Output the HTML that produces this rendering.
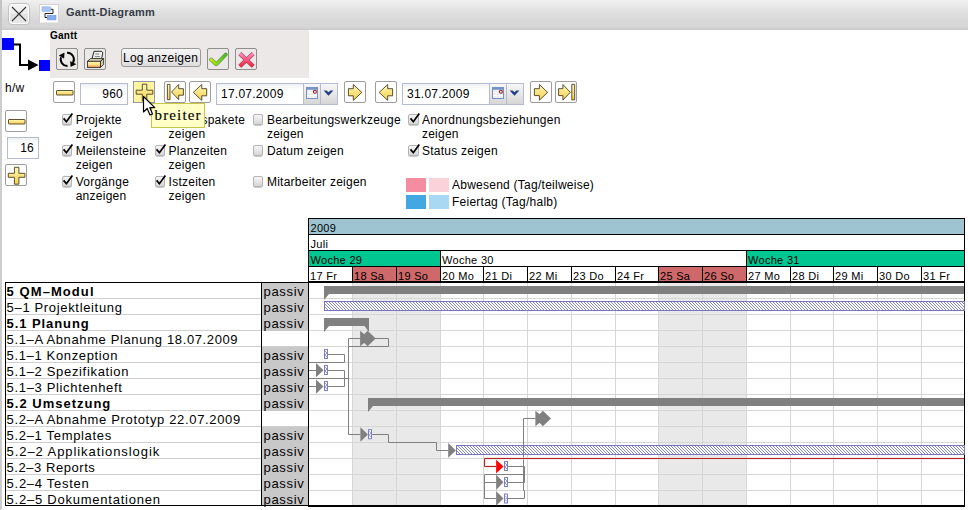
<!DOCTYPE html>
<html><head><meta charset="utf-8">
<style>
html,body{margin:0;padding:0;width:968px;height:510px;overflow:hidden;background:#fff;position:relative;font-family:"Liberation Sans",sans-serif;}
.a{position:absolute;}
.t{position:absolute;white-space:nowrap;font-size:12px;line-height:14px;color:#000;letter-spacing:0.25px;}
.btn{position:absolute;box-sizing:border-box;border:1px solid #9d9d9d;border-radius:2px;background:#fff;}
.pbtn{position:absolute;box-sizing:border-box;border:1px solid #8e8e8e;border-radius:2px;background:#ebe8e7;}
.inp{position:absolute;box-sizing:border-box;border:1px solid #b6bbd2;background:linear-gradient(#eef0f2,#fff 6px);}
.cb{position:absolute;box-sizing:border-box;width:10.5px;height:10.5px;border:1px solid #b4b4b4;border-radius:2px;background:linear-gradient(#f6f6f6,#d6d6d6);box-shadow:0 0.5px 0.5px #999;}
svg{position:absolute;left:0;top:0;}
</style></head><body>
<!-- left strip -->
<div class="a" style="left:0;top:0;width:2px;height:510px;background:#cdcdcd"></div>
<!-- top bar -->
<div class="a" style="left:0;top:0;width:968px;height:30px;background:linear-gradient(#f0f0f0 0%,#e2e2e2 35%,#d8d8d8 65%,#d6d6d6 90%,#c8c8c8 100%);"></div>
<div class="a" style="left:0;top:0;width:2px;height:30px;background:#c4c4c4"></div>
<div class="a" style="left:8px;top:3px;width:22px;height:21.5px;box-sizing:border-box;border:1px solid #c2c2c2;border-radius:4px;background:linear-gradient(#f5f5f5 0%,#ececec 48%,#e2e2e2 52%,#e8e8e8 100%);box-shadow:inset 0 0 0 1px #fff;"></div>
<svg width="968" height="40" style="position:absolute;left:0;top:0">
<path d="M12 7L26 21M26 7L12 21" stroke="#333" stroke-width="1.1"/>
<rect x="39.5" y="4.5" width="19" height="18.5" fill="#fff" stroke="#d4d4d4"/>
<path d="M50.5 9.3H53V13.5H45V17.5H47.5" stroke="#222" fill="none" stroke-width="1"/>
<rect x="42" y="6.8" width="8.5" height="4.6" fill="#a8c4f4" stroke="#8fb0e8" stroke-width="0.6"/>
<rect x="47.3" y="15.3" width="8.7" height="4.6" fill="#86aaea" stroke="#7098e0" stroke-width="0.6"/>
</svg>
<div class="t" style="left:66px;top:5px;font-size:11px;font-weight:bold;color:#353c46;letter-spacing:0.2px;">Gantt-Diagramm</div>

<!-- connector icon -->
<svg width="52" height="80" style="position:absolute;left:0;top:0">
<rect x="2" y="38" width="12" height="12" fill="#0000ff"/>
<rect x="39" y="60" width="11" height="11" fill="#0000ff"/>
<path d="M14 44.5H20V65H29" stroke="#000" stroke-width="2" fill="none"/>
<path d="M28 59.5L38.5 65L28 70.5Z" fill="#000"/>
</svg>

<!-- Gantt panel -->
<div class="a" style="left:50px;top:30px;width:259px;height:48px;background:#ebe8e7"></div>
<div class="t" style="left:50px;top:30px;font-size:10px;font-weight:bold;line-height:12px">Gantt</div>
<div class="pbtn" style="left:56px;top:48px;width:22px;height:22px"></div>
<div class="pbtn" style="left:84px;top:48px;width:22px;height:22px"></div>
<svg width="300" height="80" style="position:absolute;left:0;top:0">
<!-- refresh -->
<path d="M61.02 57.36A6.6 6.6 0 0 0 67.53 65.99" stroke="#000" stroke-width="1.9" fill="none"/>
<path d="M67.07 52.8A6.6 6.6 0 0 1 72.84 63.0" stroke="#000" stroke-width="1.9" fill="none"/>
<path d="M59.2 55.6L64.2 53L63.9 58.2Z" fill="#000" stroke="#000" stroke-width="0.5" stroke-linejoin="round"/>
<path d="M70.5 61.6L75.8 64.2L70.8 66.4Z" fill="#000" stroke="#000" stroke-width="0.5" stroke-linejoin="round"/>
<!-- print -->
<defs><linearGradient id="pg" x1="0" y1="0" x2="0" y2="1"><stop offset="0" stop-color="#fbf7a8"/><stop offset="0.5" stop-color="#fbe690"/><stop offset="1" stop-color="#ee8a4a"/></linearGradient></defs>
<path d="M92 58.8L94 51.3H101.6L102.8 52.8L101.6 58.8Z" fill="#f0f0f0" stroke="#111" stroke-width="0.9" stroke-linejoin="round"/>
<path d="M95.3 54H99.2M94.8 56.6H100" stroke="#666" stroke-width="0.8"/>
<path d="M87.5 61.3L90.5 58.6H103.6L100.4 61.3Z" fill="#ddd6b8" stroke="#222" stroke-width="0.8" stroke-linejoin="round"/>
<path d="M100.4 61.3L103.6 58.6V64.6L100.4 67.4Z" fill="#d2c9a6" stroke="#222" stroke-width="0.8" stroke-linejoin="round"/>
<rect x="87.5" y="61.3" width="12.9" height="6.1" fill="url(#pg)" stroke="#222" stroke-width="0.8"/>
<!-- check -->
<defs><linearGradient id="cg" x1="0" y1="0" x2="1" y2="0"><stop offset="0" stop-color="#b8f000"/><stop offset="1" stop-color="#40c020"/></linearGradient>
<linearGradient id="xg" x1="0" y1="0" x2="0" y2="1"><stop offset="0" stop-color="#ff88c0"/><stop offset="1" stop-color="#ff2040"/></linearGradient></defs>
<path d="M211 59.5L216.3 64.3L225.8 54.5" stroke="#3a5a20" stroke-width="3.8" fill="none" stroke-linejoin="round" stroke-linecap="round" opacity="0.7"/>
<path d="M211 59.5L216.3 64.3L225.8 54.5" stroke="url(#cg)" stroke-width="2.6" fill="none" stroke-linejoin="round" stroke-linecap="round"/>
<path d="M239.8 53.6L253.2 66.2M253.2 53.6L239.8 66.2" stroke="#6a2030" stroke-width="4.2" stroke-linecap="butt" opacity="0.75"/>
<path d="M239.8 53.6L253.2 66.2M253.2 53.6L239.8 66.2" stroke="url(#xg)" stroke-width="3" stroke-linecap="butt"/>
</svg>
<div class="a" style="left:121px;top:48px;width:80px;height:19px;box-sizing:border-box;border:1px solid #9a9a9a;border-radius:3px;background:linear-gradient(#f6f6f6,#dedede);"></div>
<div class="t" style="left:123px;top:50.5px;">Log anzeigen</div>
<div class="pbtn" style="left:207px;top:48px;width:22px;height:22px;background:transparent"></div>
<div class="pbtn" style="left:235px;top:48px;width:22px;height:22px;background:transparent"></div>

<!-- row 2 -->
<div class="t" style="left:5px;top:81px;">h/w</div>
<div class="btn" style="left:53px;top:81px;width:22px;height:22px"></div>
<div class="inp" style="left:80px;top:83px;width:48px;height:22px"></div>
<div class="t" style="left:80px;top:87px;width:43px;text-align:right">960</div>
<div class="btn" style="left:133px;top:81px;width:22px;height:22px;background:#fff59e;border-color:#9494aa;border-radius:0"></div>
<div class="btn" style="left:164px;top:81px;width:22px;height:22px"></div>
<div class="btn" style="left:189px;top:81px;width:22px;height:22px"></div>
<div class="inp" style="left:216px;top:83px;width:122px;height:22px"></div>
<div class="t" style="left:221px;top:87px;">17.07.2009</div>
<div class="a" style="left:303px;top:84px;width:17px;height:20px;box-sizing:border-box;border-left:1px solid #b6bbd2;background:linear-gradient(#f7f7f7,#d6d6d6)"></div>
<div class="a" style="left:320px;top:84px;width:17px;height:20px;box-sizing:border-box;border-left:1px solid #b6bbd2;background:linear-gradient(#f7f7f7,#d6d6d6)"></div>
<div class="btn" style="left:344px;top:81px;width:22px;height:22px"></div>
<div class="btn" style="left:375px;top:81px;width:22px;height:22px"></div>
<div class="inp" style="left:402px;top:83px;width:122px;height:22px"></div>
<div class="t" style="left:407px;top:87px;">31.07.2009</div>
<div class="a" style="left:489px;top:84px;width:17px;height:20px;box-sizing:border-box;border-left:1px solid #b6bbd2;background:linear-gradient(#f7f7f7,#d6d6d6)"></div>
<div class="a" style="left:506px;top:84px;width:17px;height:20px;box-sizing:border-box;border-left:1px solid #b6bbd2;background:linear-gradient(#f7f7f7,#d6d6d6)"></div>
<div class="btn" style="left:530px;top:81px;width:22px;height:22px"></div>
<div class="btn" style="left:555px;top:81px;width:22px;height:22px"></div>

<!-- left col -->
<div class="btn" style="left:5px;top:110px;width:22px;height:22px"></div>
<div class="inp" style="left:7px;top:137px;width:32px;height:22px"></div>
<div class="t" style="left:7px;top:141px;width:27px;text-align:right">16</div>
<div class="btn" style="left:5px;top:164px;width:22px;height:22px"></div>

<svg width="968" height="220" style="position:absolute;left:0;top:0">
<defs>
<linearGradient id="yg" x1="0" y1="0" x2="0" y2="1"><stop offset="0" stop-color="#fff8b8"/><stop offset="1" stop-color="#f5d04a"/></linearGradient>
<linearGradient id="yh" x1="0" y1="0" x2="1" y2="0"><stop offset="0" stop-color="#fff6b8"/><stop offset="1" stop-color="#f2d257"/></linearGradient>
</defs>
<g stroke="#4a4020" stroke-width="0.9" fill="url(#yg)" stroke-linejoin="round">
<!-- minus -->
<rect x="56.5" y="90.5" width="16.5" height="4.5" rx="0.5"/>
<rect x="8.5" y="119.5" width="16.5" height="4.5" rx="0.5"/>
<!-- plus hovered -->
<path d="M142.3 84.2H146.8V90.2H152.8V94.2H146.8V101.1H142.3V94.2H136.2V90.2H142.3Z"/>
<path d="M14.4 167.3H18.9V173.3H24.9V177.3H18.9V184.2H14.4V177.3H8.3V173.3H14.4Z"/>
<!-- first -->
<rect x="167.4" y="84.3" width="2.6" height="15.4"/>
<path d="M171.6 92L178.7 84.5V88.7H183.4V95.2H178.7V99.6Z"/>
<!-- prev -->
<path d="M193.3 92.4L201.8 84.5V88.7H206.7V95.8H201.8V100.4Z"/>
<path d="M379.2 92.4L387.7 84.5V88.7H392.6V95.8H387.7V100.4Z"/>
<!-- next -->
<path d="M361.8 92.4L353.3 84.5V88.7H348.4V95.8H353.3V100.4Z"/>
<path d="M547.6 92.4L539.4 84.5V88.7H534.4V95.6H539.4V100.2Z"/>
<!-- last -->
<path d="M570.3 92.3L562.9 84.5V88.7H558.6V95.6H562.9V100.1Z"/>
<rect x="571.8" y="84.3" width="2.9" height="15.6"/>
</g>
<!-- calendars -->
<g>
<rect x="306.5" y="87.5" width="11" height="11" fill="#ececec" stroke="#7393c6"/>
<rect x="306.5" y="87.5" width="11" height="2.2" fill="#7393c6"/>
<path d="M310 90V98M313.5 90V98M307 92.5H317M307 95.5H317" stroke="#fff" stroke-width="0.9"/>
<circle cx="314.9" cy="91.8" r="1.5" fill="#fff" stroke="#a41414" stroke-width="1.1"/>
<path d="M323.6 90.6H326.6L328.5 92.3L330.4 90.6H333.4L328.5 95.8Z" fill="#223f86"/>
<rect x="492.5" y="87.5" width="11" height="11" fill="#ececec" stroke="#7393c6"/>
<rect x="492.5" y="87.5" width="11" height="2.2" fill="#7393c6"/>
<path d="M496 90V98M499.5 90V98M493 92.5H503M493 95.5H503" stroke="#fff" stroke-width="0.9"/>
<circle cx="500.9" cy="91.8" r="1.5" fill="#fff" stroke="#a41414" stroke-width="1.1"/>
<path d="M509.6 90.6H512.6L514.5 92.3L516.4 90.6H519.4L514.5 95.8Z" fill="#223f86"/>
</g>
</svg>

<!-- checkboxes -->
<div class="cb" style="left:61.5px;top:114.1px"></div>
<div class="cb" style="left:61.5px;top:145.1px"></div>
<div class="cb" style="left:61.5px;top:176.1px"></div>
<div class="cb" style="left:154.5px;top:114.1px"></div>
<div class="cb" style="left:154.5px;top:145.1px"></div>
<div class="cb" style="left:154.5px;top:176.1px"></div>
<div class="cb" style="left:252.5px;top:114.1px"></div>
<div class="cb" style="left:252.5px;top:145.1px"></div>
<div class="cb" style="left:252.5px;top:176.1px"></div>
<div class="cb" style="left:408.4px;top:114.1px"></div>
<div class="cb" style="left:408.4px;top:145.1px"></div>
<svg width="968" height="220" style="position:absolute;left:0;top:0">
<g stroke="#000" stroke-width="1.7" fill="none" stroke-linejoin="miter">
<path d="M63.6 118.4L66.4 121.7L72.4 113.4"/>
<path d="M63.6 149.4L66.4 152.7L72.4 144.4"/>
<path d="M63.6 180.4L66.4 183.7L72.4 175.4"/>
<path d="M156.6 149.4L159.4 152.7L165.4 144.4"/>
<path d="M156.6 180.4L159.4 183.7L165.4 175.4"/>
<path d="M410.5 118.4L413.3 121.7L419.3 113.4"/>
<path d="M410.5 149.4L413.3 152.7L419.3 144.4"/>
</g></svg>
<div class="t" style="left:75.7px;top:113.3px">Projekte<br>zeigen</div>
<div class="t" style="left:75.7px;top:144.3px">Meilensteine<br>zeigen</div>
<div class="t" style="left:75.7px;top:175.3px">Vorgänge<br>anzeigen</div>
<div class="t" style="left:168.6px;top:113.3px">Arbeitspakete<br>zeigen</div>
<div class="t" style="left:168.6px;top:144.3px">Planzeiten<br>zeigen</div>
<div class="t" style="left:168.6px;top:175.3px">Istzeiten<br>zeigen</div>
<div class="t" style="left:266.9px;top:113.3px">Bearbeitungswerkzeuge<br>zeigen</div>
<div class="t" style="left:266.9px;top:144.3px">Datum zeigen</div>
<div class="t" style="left:266.9px;top:175.3px">Mitarbeiter zeigen</div>
<div class="t" style="left:421.9px;top:113.3px">Anordnungsbeziehungen<br>zeigen</div>
<div class="t" style="left:421.9px;top:144.3px">Status zeigen</div>

<!-- legend -->
<div class="a" style="left:406px;top:178px;width:20px;height:14px;background:#f48da0"></div>
<div class="a" style="left:429px;top:178px;width:20px;height:14px;background:#f9d2da"></div>
<div class="a" style="left:406px;top:195px;width:20px;height:14px;background:#43a8e2"></div>
<div class="a" style="left:429px;top:195px;width:20px;height:14px;background:#a8d8f2"></div>
<div class="t" style="left:452px;top:178px">Abwesend (Tag/teilweise)</div>
<div class="t" style="left:452px;top:195px">Feiertag (Tag/halb)</div>

<!-- gantt chart -->
<svg width="968" height="510" viewBox="0 0 968 510">
<rect x="308.0" y="218" width="656" height="16" fill="#9fc4d1"/>
<rect x="308.0" y="234" width="656" height="16" fill="#ffffff"/>
<rect x="308.0" y="250" width="132.0" height="16" fill="#00c792"/>
<rect x="746" y="250" width="219" height="16" fill="#00c792"/>
<rect x="352" y="266" width="44" height="16" fill="#cf6868"/>
<rect x="396" y="266" width="44" height="16" fill="#cf6868"/>
<rect x="658" y="266" width="44" height="16" fill="#cf6868"/>
<rect x="702" y="266" width="44" height="16" fill="#cf6868"/>
<rect x="352" y="283" width="88" height="222" fill="#e9e9e9"/>
<rect x="658" y="283" width="88" height="222" fill="#e9e9e9"/>
<path d="M352.5 283V505 M396.5 283V505 M440.5 283V505 M483.5 283V505 M527.5 283V505 M571.5 283V505 M615.5 283V505 M658.5 283V505 M702.5 283V505 M746.5 283V505 M790.5 283V505 M833.5 283V505 M877.5 283V505 M921.5 283V505 M309 298.5H964 M309 314.5H964 M309 330.5H964 M309 346.5H964 M309 362.5H964 M309 378.5H964 M309 394.5H964 M309 410.5H964 M309 426.5H964 M309 442.5H964 M309 458.5H964 M309 474.5H964 M309 490.5H964" stroke="#d6d6d6" stroke-width="1" fill="none"/>
<path d="M308 234.5H965 M308 250.5H965 M308 266.5H965 M440.5 250V266 M746.5 250V266 M352.5 266V282 M396.5 266V282 M440.5 266V282 M483.5 266V282 M527.5 266V282 M571.5 266V282 M615.5 266V282 M658.5 266V282 M702.5 266V282 M746.5 266V282 M790.5 266V282 M833.5 266V282 M877.5 266V282 M921.5 266V282" stroke="#000" stroke-width="1" fill="none"/>
<rect x="308.5" y="218.5" width="656" height="287" fill="none" stroke="#000" stroke-width="1"/>
<rect x="308" y="281" width="657" height="2" fill="#000"/>
<rect x="308" y="505" width="657" height="2" fill="#000"/>
<text x="310.5" y="232" font-family="Liberation Sans" font-size="11" letter-spacing="0.3">2009</text>
<text x="310.5" y="248" font-family="Liberation Sans" font-size="11" letter-spacing="0.3">Juli</text>
<text x="310.5" y="264" font-family="Liberation Sans" font-size="11" letter-spacing="0.3">Woche 29</text>
<text x="442" y="264" font-family="Liberation Sans" font-size="11" letter-spacing="0.3">Woche 30</text>
<text x="748" y="264" font-family="Liberation Sans" font-size="11" letter-spacing="0.3">Woche 31</text>
<text x="310.0" y="280" font-family="Liberation Sans" font-size="11" letter-spacing="0.3">17 Fr</text>
<text x="354" y="280" font-family="Liberation Sans" font-size="11" letter-spacing="0.3">18 Sa</text>
<text x="398" y="280" font-family="Liberation Sans" font-size="11" letter-spacing="0.3">19 So</text>
<text x="442" y="280" font-family="Liberation Sans" font-size="11" letter-spacing="0.3">20 Mo</text>
<text x="485" y="280" font-family="Liberation Sans" font-size="11" letter-spacing="0.3">21 Di</text>
<text x="529" y="280" font-family="Liberation Sans" font-size="11" letter-spacing="0.3">22 Mi</text>
<text x="573" y="280" font-family="Liberation Sans" font-size="11" letter-spacing="0.3">23 Do</text>
<text x="617" y="280" font-family="Liberation Sans" font-size="11" letter-spacing="0.3">24 Fr</text>
<text x="660" y="280" font-family="Liberation Sans" font-size="11" letter-spacing="0.3">25 Sa</text>
<text x="704" y="280" font-family="Liberation Sans" font-size="11" letter-spacing="0.3">26 So</text>
<text x="748" y="280" font-family="Liberation Sans" font-size="11" letter-spacing="0.3">27 Mo</text>
<text x="792" y="280" font-family="Liberation Sans" font-size="11" letter-spacing="0.3">28 Di</text>
<text x="835" y="280" font-family="Liberation Sans" font-size="11" letter-spacing="0.3">29 Mi</text>
<text x="879" y="280" font-family="Liberation Sans" font-size="11" letter-spacing="0.3">30 Do</text>
<text x="923" y="280" font-family="Liberation Sans" font-size="11" letter-spacing="0.3">31 Fr</text>
<path d="M6 298.5H261 M262 298.5H308 M6 314.5H261 M262 314.5H308 M6 330.5H261 M262 330.5H308 M6 346.5H261 M262 346.5H308 M6 362.5H261 M262 362.5H308 M6 378.5H261 M262 378.5H308 M6 394.5H261 M262 394.5H308 M6 410.5H261 M262 410.5H308 M6 426.5H261 M262 426.5H308 M6 442.5H261 M262 442.5H308 M6 458.5H261 M262 458.5H308 M6 474.5H261 M262 474.5H308 M6 490.5H261 M262 490.5H308" stroke="#cfcfcf" stroke-width="1" fill="none"/>
<rect x="262" y="283" width="46" height="16" fill="#c8c8c8"/>
<rect x="262" y="299" width="46" height="16" fill="#c8c8c8"/>
<rect x="262" y="315" width="46" height="16" fill="#c8c8c8"/>
<rect x="262" y="347" width="46" height="16" fill="#c8c8c8"/>
<rect x="262" y="363" width="46" height="16" fill="#c8c8c8"/>
<rect x="262" y="379" width="46" height="16" fill="#c8c8c8"/>
<rect x="262" y="395" width="46" height="16" fill="#c8c8c8"/>
<rect x="262" y="427" width="46" height="16" fill="#c8c8c8"/>
<rect x="262" y="443" width="46" height="16" fill="#c8c8c8"/>
<rect x="262" y="459" width="46" height="16" fill="#c8c8c8"/>
<rect x="262" y="475" width="46" height="16" fill="#c8c8c8"/>
<rect x="262" y="491" width="46" height="15" fill="#c8c8c8"/>
<path d="M5.5 282V506 M261.5 282V506 M308.5 282V506" stroke="#000" stroke-width="1"/>
<rect x="5" y="282" width="304" height="1" fill="#000"/>
<rect x="5" y="505" width="304" height="1" fill="#000"/>
<text x="6.6" y="296.0" font-family="Liberation Sans" font-size="13" font-weight="bold" textLength="86.9" lengthAdjust="spacing">5 QM–Modul</text>
<text x="263.5" y="296.0" font-family="Liberation Sans" font-size="13" letter-spacing="0.7">passiv</text>
<text x="6.6" y="312.0" font-family="Liberation Sans" font-size="13" textLength="115.3" lengthAdjust="spacing">5–1 Projektleitung</text>
<text x="263.5" y="312.0" font-family="Liberation Sans" font-size="13" letter-spacing="0.7">passiv</text>
<text x="6.6" y="328.0" font-family="Liberation Sans" font-size="13" font-weight="bold" textLength="82.2" lengthAdjust="spacing">5.1 Planung</text>
<text x="263.5" y="328.0" font-family="Liberation Sans" font-size="13" letter-spacing="0.7">passiv</text>
<text x="6.6" y="344.0" font-family="Liberation Sans" font-size="13" textLength="231.0" lengthAdjust="spacing">5.1–A Abnahme Planung 18.07.2009</text>
<text x="6.6" y="360.0" font-family="Liberation Sans" font-size="13" textLength="110.8" lengthAdjust="spacing">5.1–1 Konzeption</text>
<text x="263.5" y="360.0" font-family="Liberation Sans" font-size="13" letter-spacing="0.7">passiv</text>
<text x="6.6" y="376.0" font-family="Liberation Sans" font-size="13" textLength="121.9" lengthAdjust="spacing">5.1–2 Spezifikation</text>
<text x="263.5" y="376.0" font-family="Liberation Sans" font-size="13" letter-spacing="0.7">passiv</text>
<text x="6.6" y="392.0" font-family="Liberation Sans" font-size="13" textLength="115.3" lengthAdjust="spacing">5.1–3 Plichtenheft</text>
<text x="263.5" y="392.0" font-family="Liberation Sans" font-size="13" letter-spacing="0.7">passiv</text>
<text x="6.6" y="408.0" font-family="Liberation Sans" font-size="13" font-weight="bold" textLength="103.7" lengthAdjust="spacing">5.2 Umsetzung</text>
<text x="263.5" y="408.0" font-family="Liberation Sans" font-size="13" letter-spacing="0.7">passiv</text>
<text x="6.6" y="424.0" font-family="Liberation Sans" font-size="13" textLength="233.6" lengthAdjust="spacing">5.2–A Abnahme Prototyp 22.07.2009</text>
<text x="6.6" y="440.0" font-family="Liberation Sans" font-size="13" textLength="104.6" lengthAdjust="spacing">5.2–1 Templates</text>
<text x="263.5" y="440.0" font-family="Liberation Sans" font-size="13" letter-spacing="0.7">passiv</text>
<text x="6.6" y="456.0" font-family="Liberation Sans" font-size="13" textLength="152.6" lengthAdjust="spacing">5.2–2 Applikationslogik</text>
<text x="263.5" y="456.0" font-family="Liberation Sans" font-size="13" letter-spacing="0.7">passiv</text>
<text x="6.6" y="472.0" font-family="Liberation Sans" font-size="13" textLength="88.2" lengthAdjust="spacing">5.2–3 Reports</text>
<text x="263.5" y="472.0" font-family="Liberation Sans" font-size="13" letter-spacing="0.7">passiv</text>
<text x="6.6" y="488.0" font-family="Liberation Sans" font-size="13" textLength="82.2" lengthAdjust="spacing">5.2–4 Testen</text>
<text x="263.5" y="488.0" font-family="Liberation Sans" font-size="13" letter-spacing="0.7">passiv</text>
<text x="6.6" y="504.0" font-family="Liberation Sans" font-size="13" textLength="153.3" lengthAdjust="spacing">5.2–5 Dokumentationen</text>
<text x="263.5" y="504.0" font-family="Liberation Sans" font-size="13" letter-spacing="0.7">passiv</text>
<path d="M324 286H964V294H329L324 300Z" fill="#808080"/>
<path d="M324 318H369V332L364.5 326H329L324 332Z" fill="#808080"/>
<path d="M368 398H964V406H373L368 412Z" fill="#808080"/>
<defs><pattern id="hat" patternUnits="userSpaceOnUse" x="0" y="0" width="3" height="3"><rect width="3" height="3" fill="#fff"/><rect x="0" y="0" width="1" height="1" fill="#8686c6"/><rect x="1" y="1" width="1" height="1" fill="#8686c6"/><rect x="2" y="2" width="1" height="1" fill="#8686c6"/></pattern></defs>
<rect x="324.5" y="301.5" width="640" height="9" fill="url(#hat)" stroke="#7676c0" stroke-width="1"/>
<rect x="456.5" y="445.5" width="508" height="9" fill="url(#hat)" stroke="#7676c0" stroke-width="1"/>
<path d="M327.6 354.5H344.5V362.5H309 M309 370.5H316 M327.6 370.5H344.5V386.5H327.6 M309 378.5H348.5 M309 386.5H316 M348.5 338.5V434.5H360.4 M348.5 338.5H361 M375 338.5H388.5V346.5H348.5 M372.2 434.5H388.5V442.5H436.5V450.5H448.2 M523.5 418.5H535.3 M523.5 418.5V490.5H524.5V498.5H507.7 M507.7 466.5H524.5V482.5H507.7 M484.5 474.5H523.5 M484.5 474.5V498.5H496 M484.5 482.5H496" stroke="#808080" stroke-width="1" fill="none"/>
<path d="M964 458.5H484.5V466.5H496" stroke="#fbd8d8" stroke-width="3" fill="none" opacity="0.6"/>
<path d="M964 458.5H484.5V466.5H496" stroke="#ac2626" stroke-width="1" fill="none"/>
<path d="M360.1 330.75L369.6 338.5L360.1 346.25Z" fill="#808080"/><path d="M360.0 338.5L367.6 330.75L375.70000000000005 338.5L367.6 346.25Z" fill="#808080"/>
<path d="M535.4 410.65L544.9 418.4L535.4 426.15Z" fill="#808080"/><path d="M535.3 418.4L542.9 410.65L551.0 418.4L542.9 426.15Z" fill="#808080"/>
<path d="M316 363L323.5 370.15L316 377.3Z" fill="#808080"/>
<path d="M316 379.4L323.5 386.6L316 393.8Z" fill="#808080"/>
<path d="M360.4 427.2L367.9 434.5L360.4 441.8Z" fill="#808080"/>
<path d="M448.2 443L455.8 450.4L448.2 457.8Z" fill="#808080"/>
<path d="M496.1 474.5L503.5 482.2L496.1 489.9Z" fill="#808080"/>
<path d="M496.1 491L503.5 498.4L496.1 505.8Z" fill="#808080"/>
<path d="M496.1 459.7L503.5 466.54999999999995L496.1 473.4Z" fill="#ff0000"/>
<rect x="324.5" y="349.5" width="3" height="9" fill="#fff" stroke="#7c7cd0" stroke-width="1"/><path d="M325 351L327 353L325 355L327 357" stroke="#7c7cd0" stroke-width="0.8" fill="none"/>
<rect x="324.5" y="365.5" width="3" height="9" fill="#fff" stroke="#7c7cd0" stroke-width="1"/><path d="M325 367L327 369L325 371L327 373" stroke="#7c7cd0" stroke-width="0.8" fill="none"/>
<rect x="324.5" y="381.5" width="3" height="9" fill="#fff" stroke="#7c7cd0" stroke-width="1"/><path d="M325 383L327 385L325 387L327 389" stroke="#7c7cd0" stroke-width="0.8" fill="none"/>
<rect x="368.5" y="429.7" width="3" height="9" fill="#fff" stroke="#7c7cd0" stroke-width="1"/><path d="M369 431.2L371 433.2L369 435.2L371 437.2" stroke="#7c7cd0" stroke-width="0.8" fill="none"/>
<rect x="504.5" y="461.5" width="3" height="9" fill="#fff" stroke="#7c7cd0" stroke-width="1"/><path d="M505 463L507 465L505 467L507 469" stroke="#7c7cd0" stroke-width="0.8" fill="none"/>
<rect x="504.5" y="477.5" width="3" height="9" fill="#fff" stroke="#7c7cd0" stroke-width="1"/><path d="M505 479L507 481L505 483L507 485" stroke="#7c7cd0" stroke-width="0.8" fill="none"/>
<rect x="504.5" y="494.0" width="3" height="9" fill="#fff" stroke="#7c7cd0" stroke-width="1"/><path d="M505 495.5L507 497.5L505 499.5L507 501.5" stroke="#7c7cd0" stroke-width="0.8" fill="none"/>
</svg>

<!-- tooltip -->
<div class="a" style="left:151px;top:103px;width:54px;height:25px;box-sizing:border-box;border:1px solid #c8c64a;background:#ffffc6"></div>
<div class="t" style="left:154.5px;top:106.5px;font-family:'Liberation Serif',serif;font-size:15px;line-height:17px;letter-spacing:1.15px;-webkit-text-stroke:0.12px #000">breiter</div>
<!-- cursor -->
<svg width="20" height="24" style="position:absolute;left:142px;top:94.5px">
<path d="M1.5 1.5V17L5.2 13.5L8 20L10.5 19L7.8 12.6H12.8Z" fill="#fff" stroke="#000" stroke-width="1.2" stroke-linejoin="round"/>
</svg>
</body></html>
